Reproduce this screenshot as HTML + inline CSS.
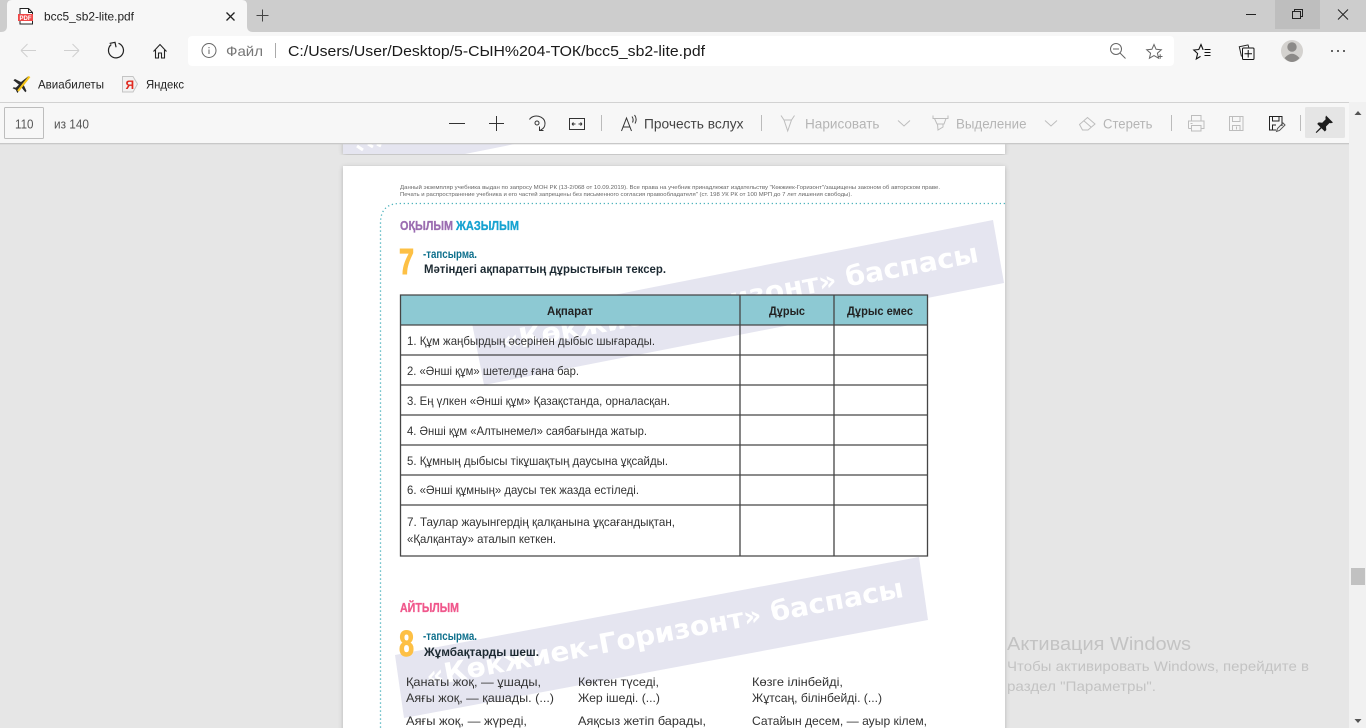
<!DOCTYPE html>
<html lang="ru">
<head>
<meta charset="utf-8">
<title>bcc5_sb2-lite.pdf</title>
<style>
html,body{margin:0;padding:0;width:1366px;height:728px;overflow:hidden;background:#e6e6e6}
svg{display:block;position:absolute;left:0;top:0}
text{font-family:"Liberation Sans","DejaVu Sans",sans-serif;white-space:pre}
.ui{font-size:12px;fill:#222}
.bk{font-size:12px;fill:#333}
.b{font-weight:bold}
.wm{font-family:"DejaVu Sans","Liberation Sans",sans-serif;font-size:27px;font-weight:bold;fill:#fff}
.ic{fill:none;stroke:#333;stroke-width:1}
.dis{fill:none;stroke:#bdbdbd;stroke-width:1}
.dt{font-size:13.5px;fill:#b5b5b5}
.tl{fill:none;stroke:#444;stroke-width:1.3}
</style>
</head>
<body>
<svg width="1366" height="728" viewBox="0 0 1366 728" xmlns="http://www.w3.org/2000/svg">
<defs>
<filter id="sh" x="-5%" y="-5%" width="110%" height="110%"><feDropShadow dx="0" dy="1" stdDeviation="2.5" flood-color="#000" flood-opacity=".22"/></filter>
<filter id="soft" x="-2%" y="-2%" width="104%" height="104%"><feGaussianBlur stdDeviation=".25"/></filter>
</defs>

<!-- viewer background -->
<rect x="0" y="143" width="1349" height="585" fill="#e6e6e6"/>

<!-- page 1 remainder -->
<rect x="343" y="140" width="662" height="14" fill="#fff" filter="url(#sh)"/>
<polygon points="343,143 520,143 465,154 343,154" fill="#e5e5f0"/>
<path d="M357 146l6 4M368 144l5 3M377 144l4 2" stroke="#fff" stroke-width="3" fill="none"/>

<!-- page 2 -->
<rect x="343" y="166" width="662" height="570" fill="#fff" filter="url(#sh)"/>

<polygon points="472,323 993,220 1004,283 484,385" fill="#e5e5f0"/>
<polygon points="395,655 919,557 928,620 404,718" fill="#e5e5f0"/>
<text class="wm" transform="translate(503,351) rotate(-10.6)" textLength="485" lengthAdjust="spacingAndGlyphs">«Көкжиек-Горизонт» баспасы</text>
<text class="wm" transform="translate(428,686) rotate(-10.6)" textLength="485" lengthAdjust="spacingAndGlyphs">«Көкжиек-Горизонт» баспасы</text>

<path d="M1005 203.5H400Q380.500 203.500 380.500 223V728" fill="none" stroke="#4fb3bd" stroke-width="1.300" stroke-dasharray="1.300 2.700"/>

<g filter="url(#soft)">
<text x="400" y="189" font-size="5.600" fill="#666" textLength="540" lengthAdjust="spacingAndGlyphs">Данный экземпляр учебника выдан по запросу МОН РК (13-2/068 от 10.09.2019). Все права на учебник принадлежат издательству "Көкжиек-Горизонт"/защищены законом об авторском праве.</text>
<text x="400" y="196" font-size="5.600" fill="#666" textLength="452" lengthAdjust="spacingAndGlyphs">Печать и распространение учебника и его частей запрещены без письменного согласия правообладателя" (ст. 198 УК РК от 100 МРП до 7 лет лишения свободы).</text>

<text x="400" y="230" font-size="13" class="b" fill="#9b6db1" stroke="#9b6db1" stroke-width=".3" textLength="53" lengthAdjust="spacingAndGlyphs">ОҚЫЛЫМ</text>
<text x="456" y="230" font-size="13" class="b" fill="#18a3d1" stroke="#18a3d1" stroke-width=".3" textLength="63" lengthAdjust="spacingAndGlyphs">ЖАЗЫЛЫМ</text>
<text x="399" y="274" font-size="36" class="b" fill="#fdc044" stroke="#fdc044" stroke-width="1" textLength="15" lengthAdjust="spacingAndGlyphs">7</text>
<text x="423" y="258" font-size="12" class="b" fill="#0f6f8c" textLength="54" lengthAdjust="spacingAndGlyphs">-тапсырма.</text>
<text x="424" y="273" font-size="12" class="b" fill="#1e2a33" textLength="242" lengthAdjust="spacingAndGlyphs">Мәтіндегі ақпараттың дұрыстығын тексер.</text>

<rect x="400.500" y="295" width="527" height="30" fill="#8dc9d3"/>
<path class="tl" d="M400.500 295H927.500V556H400.500ZM740 295V556M834 295V556M400.500 325H927.500M400.500 355H927.500M400.500 385H927.500M400.500 415H927.500M400.500 445H927.500M400.500 475H927.500M400.500 505H927.500"/>
<text x="547" y="315" font-size="12" class="b" fill="#222" textLength="46" lengthAdjust="spacingAndGlyphs">Ақпарат</text>
<text x="769" y="315" font-size="12" class="b" fill="#222" textLength="36" lengthAdjust="spacingAndGlyphs">Дұрыс</text>
<text x="847" y="315" font-size="12" class="b" fill="#222" textLength="66" lengthAdjust="spacingAndGlyphs">Дұрыс емес</text>

<text x="407" y="345" class="bk" textLength="248" lengthAdjust="spacingAndGlyphs">1. Құм жаңбырдың әсерінен дыбыс шығарады.</text>
<text x="407" y="375" class="bk" textLength="172" lengthAdjust="spacingAndGlyphs">2. «Әнші құм» шетелде ғана бар.</text>
<text x="407" y="405" class="bk" textLength="263" lengthAdjust="spacingAndGlyphs">3. Ең үлкен «Әнші құм» Қазақстанда, орналасқан.</text>
<text x="407" y="435" class="bk" textLength="240" lengthAdjust="spacingAndGlyphs">4. Әнші құм «Алтынемел» саябағында жатыр.</text>
<text x="407" y="465" class="bk" textLength="261" lengthAdjust="spacingAndGlyphs">5. Құмның дыбысы тікұшақтың даусына ұқсайды.</text>
<text x="407" y="494" class="bk" textLength="232" lengthAdjust="spacingAndGlyphs">6. «Әнші құмның» даусы тек жазда естіледі.</text>
<text x="407" y="526" class="bk" textLength="268" lengthAdjust="spacingAndGlyphs">7. Таулар жауынгердің қалқанына ұқсағандықтан,</text>
<text x="407" y="543" class="bk" textLength="149" lengthAdjust="spacingAndGlyphs">«Қалқантау» аталып кеткен.</text>

<text x="400" y="612" font-size="13" class="b" fill="#f0588c" stroke="#f0588c" stroke-width=".3" textLength="59" lengthAdjust="spacingAndGlyphs">АЙТЫЛЫМ</text>
<text x="399" y="656" font-size="36" class="b" fill="#fdc044" stroke="#fdc044" stroke-width="1" textLength="15" lengthAdjust="spacingAndGlyphs">8</text>
<text x="423" y="640" font-size="12" class="b" fill="#0f6f8c" textLength="54" lengthAdjust="spacingAndGlyphs">-тапсырма.</text>
<text x="424" y="656" font-size="12" class="b" fill="#1e2a33" textLength="115" lengthAdjust="spacingAndGlyphs">Жұмбақтарды шеш.</text>

<text x="406" y="686" class="bk" textLength="135" lengthAdjust="spacingAndGlyphs">Қанаты жоқ, — ұшады,</text>
<text x="406" y="702" class="bk" textLength="148" lengthAdjust="spacingAndGlyphs">Аяғы жоқ, — қашады. (...)</text>
<text x="406" y="725" class="bk" textLength="121" lengthAdjust="spacingAndGlyphs">Аяғы жоқ, — жүреді,</text>
<text x="578" y="686" class="bk" textLength="81" lengthAdjust="spacingAndGlyphs">Көктен түседі,</text>
<text x="578" y="702" class="bk" textLength="82" lengthAdjust="spacingAndGlyphs">Жер ішеді. (...)</text>
<text x="578" y="725" class="bk" textLength="128" lengthAdjust="spacingAndGlyphs">Аяқсыз жетіп барады,</text>
<text x="752" y="686" class="bk" textLength="91" lengthAdjust="spacingAndGlyphs">Көзге ілінбейді,</text>
<text x="752" y="702" class="bk" textLength="130" lengthAdjust="spacingAndGlyphs">Жұтсаң, білінбейді. (...)</text>
<text x="752" y="725" class="bk" textLength="175" lengthAdjust="spacingAndGlyphs">Сатайын десем, — ауыр кілем,</text>
</g>

<!-- activation watermark -->
<text x="1007" y="650" font-size="18" fill="#c3c3c3" textLength="184" lengthAdjust="spacingAndGlyphs">Активация Windows</text>
<text x="1007" y="671" font-size="14" fill="#c3c3c3" textLength="302" lengthAdjust="spacingAndGlyphs">Чтобы активировать Windows, перейдите в</text>
<text x="1007" y="691" font-size="14" fill="#c3c3c3" textLength="149" lengthAdjust="spacingAndGlyphs">раздел "Параметры".</text>

<!-- scrollbar -->
<rect x="1349" y="102" width="17" height="626" fill="#f1f1f1"/>
<path d="M1354.500 115L1358 111L1361.500 115Z" fill="#555"/>
<rect x="1351" y="568" width="14" height="17" fill="#c1c1c1"/>
<path d="M1354.500 719L1358 723L1361.500 719Z" fill="#555"/>

<!-- tab strip -->
<rect x="0" y="0" width="1366" height="32" fill="#cdcdcd"/>
<path d="M1 32Q7 32 7 26V5Q7 0 12 0H242Q247 0 247 5V26Q247 32 253 32Z" fill="#f7f7f7"/>
<rect x="1275" y="0" width="45" height="29" fill="#bebebe"/>
<path d="M20 8.500H28.500L32.500 12.500V24H20Z" fill="#fff" stroke="#222"/>
<path d="M28.500 8.500V12.500H32.500" fill="none" stroke="#222"/>
<rect x="18" y="14" width="15" height="7" fill="#f04848"/>
<text x="19.500" y="20" font-size="6.500" font-weight="bold" fill="#fff" textLength="12" lengthAdjust="spacingAndGlyphs">PDF</text>
<text x="44" y="20.500" class="ui" textLength="90" lengthAdjust="spacingAndGlyphs" fill="#222">bcc5_sb2-lite.pdf</text>
<path d="M226.500 12.500l8 8m0-8l-8 8" fill="none" stroke="#222" stroke-width="1.300"/>
<path d="M262.500 9.500v12M256.500 15.500h12" fill="none" stroke="#444"/>
<path d="M1246 14.500h10" stroke="#222"/>
<path d="M1292.500 11.500h8v7h-8zM1294.500 11.500v-2h8v7h-2" fill="none" stroke="#222"/>
<path d="M1338 9.500l10 10m0-10l-10 10" fill="none" stroke="#222"/>

<!-- toolbar -->
<rect x="0" y="32" width="1366" height="70" fill="#f7f7f7"/>
<rect x="188" y="36" width="986" height="30" rx="4" fill="#fff"/>
<path d="M21 50.500H36M21 50.500l6.500-6.500M21 50.500l6.500 6.500" fill="none" stroke="#d0d0d0" stroke-width="1"/>
<path d="M64 50.500H79M79 50.500l-6.500-6.500M79 50.500l-6.500 6.500" fill="none" stroke="#d0d0d0" stroke-width="1"/>
<path d="M111.300 44.500A7.500 7.500 0 1 0 118.500 43.300" fill="none" stroke="#222" stroke-width="1.200"/>
<path d="M110 43H115.500V48" fill="none" stroke="#222" stroke-width="1.200" transform="rotate(-12 112 45)"/>
<path d="M153.500 51.500L160 44.500L166.500 51.500M155.500 50V58H158.500V53H161.500V58H164.500V50" fill="none" stroke="#222" stroke-width="1.100"/>
<circle cx="209" cy="50.500" r="7" fill="none" stroke="#666"/>
<path d="M209 49.500v4.500M209 47v1.200" stroke="#666"/>
<text x="226" y="56" font-size="14" fill="#777" textLength="37" lengthAdjust="spacingAndGlyphs">Файл</text>
<path d="M275.500 43v15" stroke="#aaa"/>
<text x="288" y="56" font-size="15" fill="#1a1a1a" textLength="417" lengthAdjust="spacingAndGlyphs">C:/Users/User/Desktop/5-СЫН%204-ТОК/bcc5_sb2-lite.pdf</text>
<circle cx="1116" cy="49" r="5.500" fill="none" stroke="#666"/>
<path d="M1113 49h6M1120 53l5.500 5.500" fill="none" stroke="#666"/>
<path d="M1154 44.500l2.100 4.800 5.200.5-3.900 3.400 1.200 5-4.600-2.600-4.600 2.600 1.200-5-3.900-3.400 5.200-.5z" fill="none" stroke="#666"/>
<path d="M1158 56.500h4.500M1160.200 54.200v4.600" stroke="#666"/>
<path d="M1204.500 49.500h6M1204.500 52.500h6M1204.500 55.500h6" fill="none" stroke="#111"/>
<path d="M1203.500 49.500h-.5l-2-5-2.200 5-5 .5 3.800 3.500-1.300 5.500 4.200-2.600" fill="none" stroke="#111" stroke-width="1.100"/>
<path d="M1241.500 56.500l-2.200-9.800 8.700-1.800.8 2.500" fill="none" stroke="#222"/>
<rect x="1242.500" y="48" width="11.500" height="11.500" fill="#f7f7f7" stroke="#111" rx="1"/>
<path d="M1248.200 50v7.500M1244.500 53.800h7.500" stroke="#111"/>
<circle cx="1292" cy="51" r="11" fill="#d4d2cf"/>
<circle cx="1292" cy="47" r="4.700" fill="#8c8a88"/>
<path d="M1284.500 58Q1292 49.500 1299.500 58Q1296 62 1292 62Q1288 62 1284.500 58Z" fill="#8c8a88"/>
<path d="M1331 51h2M1337 51h2M1343 51h2" stroke="#333" stroke-width="1.500"/>

<!-- bookmarks -->
<path d="M15 79l6 3 7-5.500 1 1-5.500 7 3 6.500-1.200 1.200-4.300-5.500-3 3 .3 2.300-1 1-1.500-3.200-3.200-1.500 1-1 2.300.3 3-3-5.500-4.300z" fill="#2a2a2a"/>
<path d="M29.500 76.500L18 91" stroke="#f6c518" stroke-width="2.200"/>
<text x="38" y="88.500" class="ui" fill="#333" textLength="66" lengthAdjust="spacingAndGlyphs">Авиабилеты</text>
<path d="M122.500 76.500H133L137.500 84L133 92H122.500Z" fill="#f1f1f1" stroke="#c4c4c4"/>
<text x="125.500" y="89" font-size="12" font-weight="bold" fill="#e02a20">Я</text>
<text x="146" y="88.500" class="ui" fill="#333" textLength="38" lengthAdjust="spacingAndGlyphs">Яндекс</text>

<rect x="0" y="102" width="1349" height="1" fill="#d2d2d2"/>

<!-- pdf toolbar -->
<rect x="0" y="103" width="1349" height="40" fill="#f7f7f7"/>
<rect x="0" y="143" width="1349" height="1.300" fill="#c8c8c8"/>
<rect x="4.500" y="107.500" width="39" height="31" rx="1" fill="#f7f7f7" stroke="#bdbdbd"/>
<text x="15" y="128.500" font-size="13" fill="#555" textLength="18.500" lengthAdjust="spacingAndGlyphs">110</text>
<text x="54" y="128.500" font-size="13" fill="#555" textLength="35" lengthAdjust="spacingAndGlyphs">из 140</text>

<path class="ic" d="M449 123.500H465"/>
<path class="ic" d="M489 123.500H504M496.500 116V131"/>
<path class="ic" d="M529.500 119.500C533 113.500 545 115.500 545 123.500C545 126.800 543 129 540.500 130"/>
<path class="ic" d="M539.500 126.500V130.500H543.500"/>
<circle class="ic" cx="537" cy="123" r="2"/>
<rect class="ic" x="569.500" y="118.500" width="15" height="11"/>
<path class="ic" d="M572 124h3.500M572 124l1.500-1.500M572 124l1.500 1.500M582 124h-3.500M582 124l-1.500-1.500M582 124l-1.500 1.500"/>
<path d="M601.500 115v16" stroke="#bbb"/>
<path class="ic" d="M621.500 131L626.500 118L631.500 131M623 127h7"/>
<path class="ic" d="M632 116.500q2 3 .5 6M634.500 115q3 4 .5 8.500"/>
<text x="644" y="128.500" font-size="13.500" fill="#444" textLength="99.500" lengthAdjust="spacingAndGlyphs">Прочесть вслух</text>
<path d="M761.500 115v16" stroke="#bbb"/>

<path class="dis" d="M781 115.500l3 4.500h7.500l3-4.500M784 120l3.700 11 3.800-11"/>
<text x="805" y="128.500" class="dt" textLength="74.500" lengthAdjust="spacingAndGlyphs">Нарисовать</text>
<path class="dis" d="M898 120.500l6 5.500 6-5.500"/>
<path class="dis" d="M933 115.500v3h15v-3M934.500 118.500l2.500 5.500h7l2-5.500M937.500 124l.5 6 5-3v-3"/>
<text x="956" y="128.500" class="dt" textLength="70.500" lengthAdjust="spacingAndGlyphs">Выделение</text>
<path class="dis" d="M1045 120.500l6 5.500 6-5.500"/>
<path class="dis" d="M1079.500 124.500l8-7 7.500 6.500-7 6h-5.500zM1083.500 120.500l7.500 6.500"/>
<text x="1103" y="128.500" class="dt" textLength="49.500" lengthAdjust="spacingAndGlyphs">Стереть</text>
<path d="M1171.500 115v16" stroke="#bbb"/>
<path class="dis" d="M1191.500 121v-5.500h9.500v5.500M1188.500 128.500v-7.500h15.500v7.500h-3M1191.500 128.500h-3M1191.500 125.500h9.500v5.500h-9.500zM1190.500 123.500h2"/>
<path class="dis" d="M1229.500 116.500h13.500v14h-13.500zM1232.500 116.500v5h7.500v-5M1232.500 130.500v-5h7.500v5M1236.500 126.500v3"/>
<path d="M1282 126v-9.500h-12.500v13.500h6.500" fill="none" stroke="#222"/>
<path d="M1272.500 116.500v4.500h6.500v-4.500M1272.500 130v-5h3.500" fill="none" stroke="#222"/>
<path d="M1276.500 131.500l1-3 5.500-5.500 2 2-5.500 5.500z" fill="none" stroke="#555"/>
<path d="M1300.500 115v16" stroke="#bbb"/>
<rect x="1305" y="107" width="40" height="31" rx="1.500" fill="#e5e5e5"/>
<path d="M1326 115.500l7 7-2 .8-1.500-.3-3.500 3.500.3 3.500-1.500 1.500-3.300-3.300-5 4.800-.8-.8 4.800-5-3.300-3.300 1.500-1.500 3.500.3 3.500-3.500-.3-1.500z" fill="#1c1c1c"/>
</svg>
</body>
</html>
